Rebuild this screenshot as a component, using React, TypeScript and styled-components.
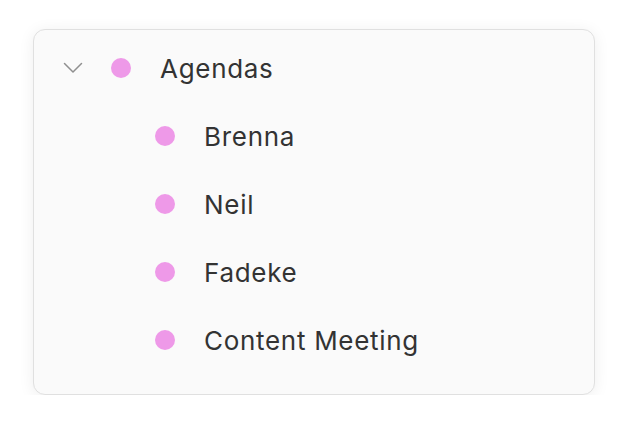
import React from "react";
import styled, { createGlobalStyle } from "styled-components";

const Global = createGlobalStyle`
  html, body { margin: 0; padding: 0; background: #ffffff; }
  body { font-family: Inter, "Noto Sans", "Liberation Sans", sans-serif; }
`;

const Page = styled.div`
  padding: 29px 0 0 33px;
`;

const Card = styled.div`
  box-sizing: border-box;
  width: 562px;
  height: 366px;
  background: #fafafa;
  border: 1px solid #e0e0e0;
  border-radius: 12px;
  box-shadow: 0 2px 16px rgba(0, 0, 0, 0.07);
  padding: 4px 0 0 0;
  display: flex;
  flex-direction: column;
`;

const Row = styled.div<{ $indent: number }>`
  display: flex;
  align-items: center;
  height: 68px;
  padding-left: ${(p) => p.$indent}px;
`;

const Toggle = styled.div`
  width: 20px;
  height: 20px;
  margin-right: 28px;
  display: flex;
  align-items: center;
  justify-content: center;
`;

const Dot = styled.span`
  width: 20px;
  height: 20px;
  border-radius: 50%;
  background: #ee99e8;
  flex: none;
  margin-right: 29px;
`;

const Label = styled.span`
  font-size: 26px;
  color: #333333;
  letter-spacing: 0.7px;
`;

const Chevron = () => (
  <svg width="20" height="12" viewBox="0 0 20 12" fill="none">
    <path d="M1.5 1.5 L10 10 L18.5 1.5" stroke="#8f8f8f" strokeWidth="1.5" strokeLinecap="round" strokeLinejoin="round" />
  </svg>
);

const children = ["Brenna", "Neil", "Fadeke", "Content Meeting"];

export default function App() {
  return (
    <>
      <Global />
      <Page>
        <Card>
          <Row $indent={29}>
            <Toggle>
              <Chevron />
            </Toggle>
            <Dot />
            <Label>Agendas</Label>
          </Row>
          {children.map((c) => (
            <Row key={c} $indent={121}>
              <Dot />
              <Label>{c}</Label>
            </Row>
          ))}
        </Card>
      </Page>
    </>
  );
}
